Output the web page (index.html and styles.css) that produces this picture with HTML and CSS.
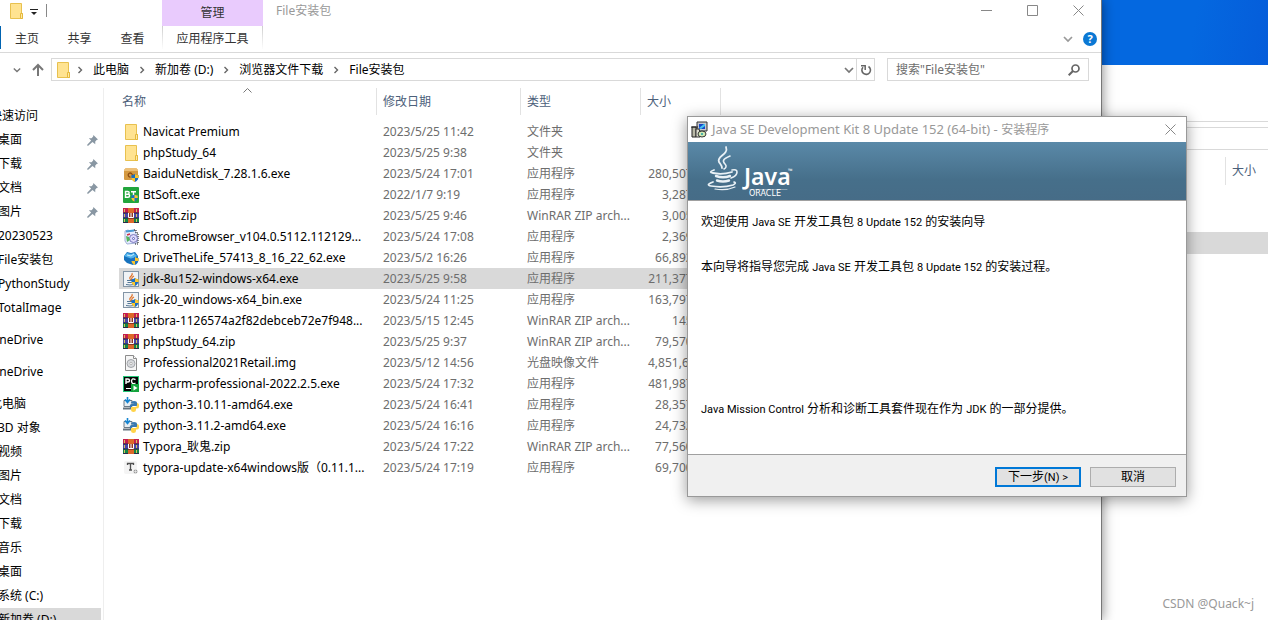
FILE: index.html
```html
<!DOCTYPE html>
<html lang="zh-CN">
<head>
<meta charset="utf-8">
<title>File安装包</title>
<link rel="stylesheet" href="styles.css">
</head>
<body>
<svg class="sprite" aria-hidden="true">
  <symbol id="folder" viewBox="0 0 16 16"><path d="M2.500.5h11v10h1v5h-12z" fill="#ffe391" stroke="#e8c14f"/><path d="M12.500 10.500h2v5h-2z" fill="#ffe9a6" stroke="#e5b93c"/></symbol>
  <symbol id="shield" viewBox="0 0 8 8"><path d="M4 0c1 .8 2.300 1.200 3.700 1.200C7.800 4.500 6.500 7 4 8 1.500 7 .2 4.500.3 1.200 1.700 1.200 3 .8 4 0z" fill="#1a6fc4"/><path d="M4 0c1 .8 2.300 1.200 3.700 1.200V4H4zM4 4v4C2 7.200.8 6 .4 4z" fill="#fbc62d"/></symbol>
  <symbol id="baidu" viewBox="0 0 16 16"><path d="M1 4l2-2h10l2 2v9q0 1-1 1H2q-1 0-1-1z" fill="#d59a42"/><path d="M1 4l2-2h10l2 2v1H1z" fill="#edc078"/><path d="M7.500 11a2 2 0 1 1 1-3.500q1.500 2.500 3 1.500" fill="none" stroke="#8c4c13" stroke-width="1.300"/><use href="#shield" x="8" y="8" width="8" height="8"/></symbol>
  <symbol id="bt" viewBox="0 0 16 16"><rect width="16" height="16" rx="1" fill="#22a53c"/><path d="M2.500 4.500h2.200q1.500 0 1.500 1.300T4.700 7.200H2.500zM2.500 7.200h2.600q1.500 0 1.500 1.500T5 10.200H2.500zM8 4.700h5M10.500 4.700v5" fill="none" stroke="#fff" stroke-width="1.400"/><use href="#shield" x="8" y="7" width="7" height="8"/></symbol>
  <symbol id="rar" viewBox="0 0 16 16"><path d="M0 0h16v5H0z" fill="#c51f4f"/><path d="M0 5h16v5H0z" fill="#4945a8"/><path d="M0 10h16v5H0z" fill="#138647"/><path d="M0 5h16M0 10h16M0 14.500h16" stroke="#292b4b"/><path d="M5 0h6v15H5z" fill="#dc6829"/><path d="M5 5h6v6H5z" fill="#8f3524"/><path d="M5.500 5v4.500h5V5M8 5v4" stroke="#fff" fill="none"/><path d="M1.500 1v3m0 2v3m0 2v3m12-13v3m0 2v3m0 2v3" stroke="#d9c25b"/></symbol>
  <symbol id="chrome" viewBox="0 0 16 16"><path d="M2 2l3-1 2 1 5-1 1 4 2 3-1 6-10 1-2-3z" fill="#e5edff" stroke="#a3b1d7"/><path d="M3 2.500l8-1" stroke="#4a9bd4" stroke-width="2"/><path d="M11 1h2v3h2v11h-4" fill="none" stroke="#111" stroke-dasharray="1 1"/><circle cx="10.500" cy="9.500" r="4" fill="#dcd9fa" stroke="#7c79bd"/><circle cx="10.500" cy="9.500" r="1" fill="#fff" stroke="#5b62ba"/><path d="M3 7l3 1 1 3-3 2z" fill="#55b45c"/><path d="M4 6l3-1" stroke="#ce3045" stroke-width="1.500"/></symbol>
  <symbol id="drive" viewBox="0 0 16 16"><path d="M1 6l3-4 4 1 4-1 3 4v5l-5 4-6-2-3-3z" fill="#1772bd"/><path d="M1 6l3-3 4 1 3-1 3 3-5 3z" fill="#52b4ec"/><path d="M4 5l4 1 3-2" stroke="#cceefe" fill="none"/><use href="#shield" x="8" y="7" width="8" height="8"/></symbol>
  <symbol id="java" viewBox="0 0 16 16"><rect x=".5" y=".5" width="15" height="15" fill="#f0f3f6" stroke="#8395a6"/><path d="M8 9C4 6 11 5 9 2M9 9c-1-2 0-3 2-4" fill="none" stroke="#df742c" stroke-width="1.200"/><path d="M4 9.500h6M4.500 11.500h5M3 13.500q4 1 8 0M10 9.500q3-.5 1 2" fill="none" stroke="#547795"/></symbol>
  <symbol id="javaexe" viewBox="0 0 16 16"><use href="#java" width="16" height="16"/><use href="#shield" x="8" y="7" width="8" height="8"/></symbol>
  <symbol id="img" viewBox="0 0 16 16"><path d="M2.500.5h8l3 3v12h-11z" fill="#f6f6f6" stroke="#8c8c8c"/><path d="M10.500.5v3h3" fill="#fff" stroke="#8c8c8c"/><circle cx="8" cy="8.500" r="4" fill="#d8dadd" stroke="#a2a5aa"/><circle cx="8" cy="8.500" r="1.200" fill="#fff" stroke="#b3b3b3"/></symbol>
  <symbol id="pycharm" viewBox="0 0 16 16"><path d="M0 0h16v16H0z" fill="#23c779"/><path d="M1 1h14v14H1z" fill="#050705"/><path d="M3 8V3h2q1.500 0 1.500 1.500T5 6H3M12.500 3.700Q9 1.500 8.500 5q.3 4 4 2" fill="none" stroke="#fff" stroke-width="1.400"/><path d="M3 12.500h5" stroke="#fff"/><path d="M8 8h8v8H8z" fill="#15a43d"/><path d="M10.500 9.500v5l4-2.500z" fill="#fff"/></symbol>
  <symbol id="python" viewBox="0 0 16 16"><path d="M1 3.500h8v6H1z" fill="#e6edf2" stroke="#6c7a86"/><path d="M0 11.500h9" stroke="#65737e" stroke-width="2"/><path d="M4.500-1v6M2 2.500l2.500 3L7 2.500" fill="none" stroke="#1685d2" stroke-width="1.600"/><path d="M8 6q0-2 3-2t3 2v3H9v2H7q-1-4 2-4h2z" fill="#3978b0"/><path d="M14 6q2.500 0 2 4-.5 1.500-2 1.500h-1V13q0 2-2.500 2T8 13v-3h4q2 0 2-2z" fill="#ffd348"/></symbol>
  <symbol id="typora" viewBox="0 0 16 16"><rect x="1" y="1" width="13" height="13" rx="2" fill="#f4f4f4"/><path d="M4.500 5V3.500h6V5M7.500 3.500v6M6 10h3" fill="none" stroke="#505050" stroke-width="1.300"/><circle cx="12.500" cy="11.500" r="2" fill="#9a9a9a"/><path d="M10.500 11.500h4m-2-2v4" stroke="#fff" stroke-width=".5"/></symbol>
  <symbol id="pin" viewBox="0 0 12 12"><path d="M7 0l5 5-1.500.5-1.500 1.500v3L6 7.500 1 12 0 11l4.500-5L2 3.500h3L6.700 1.500z" fill="#8997a3"/></symbol>
  <symbol id="right" viewBox="0 0 8 8"><path d="M2.500 1l3 3-3 3" fill="none" stroke="#666" stroke-width="1.400"/></symbol>
  <symbol id="down" viewBox="0 0 10 10"><path d="M1 3l4 4 4-4" fill="none" stroke="currentColor" stroke-width="1.700"/></symbol>
  <symbol id="close" viewBox="0 0 11 11"><path d="M.5.5l10 10m0-10l-10 10" stroke="#888"/></symbol>
</svg>

<section class="back-window" aria-label="后台窗口">
  <div class="back-ribbon"></div>
  <div class="back-address"></div>
  <div class="back-head"><span>大小</span></div>
  <div class="back-row"></div>
</section>

<main class="explorer">
  <header class="titlebar">
    <div class="quick">
      <svg class="i16"><use href="#folder"/></svg>
      <svg class="quick-arrow" viewBox="0 0 8 7"><path d="M0 .5h8" stroke="#222"/><path d="M1 3h6L4 6z" fill="#222"/></svg>
      <i class="quick-sep"></i>
    </div>
    <div class="context-title">管理</div>
    <h1 class="window-title">File安装包</h1>
    <div class="controls">
      <button aria-label="最小化"><svg viewBox="0 0 11 11"><path d="M0 5.500h11" stroke="#888"/></svg></button>
      <button aria-label="最大化"><svg viewBox="0 0 11 11"><path d="M.5.5h10v10H.5z" fill="none" stroke="#888"/></svg></button>
      <button aria-label="关闭"><svg><use href="#close"/></svg></button>
    </div>
  </header>
  <nav class="ribbon" aria-label="功能区">
    <button>主页</button><button>共享</button><button>查看</button><button class="context-tab">应用程序工具</button>
    <span class="ribbon-tools">
      <svg class="i10 faint"><use href="#down"/></svg>
      <button class="help" aria-label="帮助">?</button>
    </span>
  </nav>
  <div class="address-row">
    <div class="history">
      <svg class="i8"><use href="#down"/></svg>
      <svg class="up" viewBox="0 0 12 14"><path d="M6 13V2M1 7l5-5 5 5" fill="none" stroke="#777" stroke-width="2"/></svg>
    </div>
    <div class="address">
      <svg class="i16"><use href="#folder"/></svg>
      <svg class="i8"><use href="#right"/></svg><button>此电脑</button>
      <svg class="i8"><use href="#right"/></svg><button>新加卷 (D:)</button>
      <svg class="i8"><use href="#right"/></svg><button>浏览器文件下载</button>
      <svg class="i8"><use href="#right"/></svg><button>File安装包</button>
      <svg class="i10 drop"><use href="#down"/></svg>
      <button class="refresh" aria-label="刷新"><svg viewBox="0 0 12 12"><path d="M8.500 2.500A4.300 4.300 0 1 1 3 3.200" fill="none" stroke="#666" stroke-width="1.600"/><path d="M1 1.800h4.200V6" fill="none" stroke="#666" stroke-width="1.500"/></svg></button>
    </div>
    <label class="search">
      <input type="search" placeholder='搜索"File安装包"' aria-label="搜索">
      <svg viewBox="0 0 12 12"><circle cx="7.500" cy="4.500" r="3.500" fill="none" stroke="#666" stroke-width="1.700"/><path d="M5 7L.7 11.300" stroke="#666" stroke-width="2"/></svg>
    </label>
  </div>
  <div class="content">
    <nav class="tree" aria-label="导航窗格">
      <ul>
        <li class="root">快速访问</li>
        <li>桌面<svg><use href="#pin"/></svg></li>
        <li>下载<svg><use href="#pin"/></svg></li>
        <li>文档<svg><use href="#pin"/></svg></li>
        <li>图片<svg><use href="#pin"/></svg></li>
        <li>20230523</li>
        <li>File安装包</li>
        <li>PythonStudy</li>
        <li>TotalImage</li>
      </ul>
      <ul><li class="root">OneDrive</li></ul>
      <ul><li class="root">OneDrive</li></ul>
      <ul>
        <li class="root">此电脑</li>
        <li>3D 对象</li>
        <li>视频</li>
        <li>图片</li>
        <li>文档</li>
        <li>下载</li>
        <li>音乐</li>
        <li>桌面</li>
        <li>系统 (C:)</li>
        <li class="selected">新加卷 (D:)</li>
      </ul>
    </nav>
    <div class="files">
      <table>
        <colgroup><col class="c-name"><col class="c-date"><col class="c-type"><col class="c-size"></colgroup>
        <thead><tr>
          <th><div>名称<svg class="sort" viewBox="0 0 9 5"><path d="M.5 4.500l4-4 4 4" fill="none" stroke="#777"/></svg></div></th>
          <th><div>修改日期</div></th><th><div>类型</div></th><th><div>大小</div></th>
        </tr></thead>
        <tbody>
          <tr><td><svg><use href="#folder"/></svg>Navicat Premium</td><td>2023/5/25 11:42</td><td>文件夹</td><td></td></tr>
          <tr><td><svg><use href="#folder"/></svg>phpStudy_64</td><td>2023/5/25 9:38</td><td>文件夹</td><td></td></tr>
          <tr><td><svg><use href="#baidu"/></svg>BaiduNetdisk_7.28.1.6.exe</td><td>2023/5/24 17:01</td><td>应用程序</td><td>280,507 KB</td></tr>
          <tr><td><svg><use href="#bt"/></svg>BtSoft.exe</td><td>2022/1/7 9:19</td><td>应用程序</td><td>3,287 KB</td></tr>
          <tr><td><svg><use href="#rar"/></svg>BtSoft.zip</td><td>2023/5/25 9:46</td><td>WinRAR ZIP arch...</td><td>3,005 KB</td></tr>
          <tr><td><svg><use href="#chrome"/></svg>ChromeBrowser_v104.0.5112.112129...</td><td>2023/5/24 17:08</td><td>应用程序</td><td>2,369 KB</td></tr>
          <tr><td><svg><use href="#drive"/></svg>DriveTheLife_57413_8_16_22_62.exe</td><td>2023/5/2 16:26</td><td>应用程序</td><td>66,892 KB</td></tr>
          <tr class="selected"><td><svg><use href="#javaexe"/></svg>jdk-8u152-windows-x64.exe</td><td>2023/5/25 9:58</td><td>应用程序</td><td>211,377 KB</td></tr>
          <tr><td><svg><use href="#javaexe"/></svg>jdk-20_windows-x64_bin.exe</td><td>2023/5/24 11:25</td><td>应用程序</td><td>163,797 KB</td></tr>
          <tr><td><svg><use href="#rar"/></svg>jetbra-1126574a2f82debceb72e7f948...</td><td>2023/5/15 12:45</td><td>WinRAR ZIP arch...</td><td>145 KB</td></tr>
          <tr><td><svg><use href="#rar"/></svg>phpStudy_64.zip</td><td>2023/5/25 9:37</td><td>WinRAR ZIP arch...</td><td>79,570 KB</td></tr>
          <tr><td><svg><use href="#img"/></svg>Professional2021Retail.img</td><td>2023/5/12 14:56</td><td>光盘映像文件</td><td>4,851,668 KB</td></tr>
          <tr><td><svg><use href="#pycharm"/></svg>pycharm-professional-2022.2.5.exe</td><td>2023/5/24 17:32</td><td>应用程序</td><td>481,987 KB</td></tr>
          <tr><td><svg><use href="#python"/></svg>python-3.10.11-amd64.exe</td><td>2023/5/24 16:41</td><td>应用程序</td><td>28,357 KB</td></tr>
          <tr><td><svg><use href="#python"/></svg>python-3.11.2-amd64.exe</td><td>2023/5/24 16:16</td><td>应用程序</td><td>24,732 KB</td></tr>
          <tr><td><svg><use href="#rar"/></svg>Typora_耿鬼.zip</td><td>2023/5/24 17:22</td><td>WinRAR ZIP arch...</td><td>77,560 KB</td></tr>
          <tr><td><svg><use href="#typora"/></svg>typora-update-x64windows版（0.11.1...</td><td>2023/5/24 17:19</td><td>应用程序</td><td>69,700 KB</td></tr>
        </tbody>
      </table>
    </div>
  </div>
</main>

<section class="dialog" role="dialog" aria-labelledby="dialog-title">
  <header class="dialog-title">
    <svg class="i16" viewBox="0 0 16 16"><path d="M6 0h10v9H6z" fill="#c5c8ce" stroke="#333"/><path d="M8 2h6v5H8z" fill="#1746c9"/><path d="M8 6l5-4h1v2l-4 3z" fill="#45c4ee"/><path d="M1 5h4v10H1zM0 5h7" fill="#b8b8a6" stroke="#222"/><path d="M5 7h3l1 3v5H5z" fill="#deded0" stroke="#333"/><ellipse cx="11" cy="12" rx="4" ry="3" fill="#d1e8b4" stroke="#333"/><circle cx="11" cy="12" r="1" fill="#1fa3a8"/></svg>
    <h2 id="dialog-title"><span>Java SE Development Kit 8 Update 152 (64-bit) - </span>安装程序</h2>
    <button aria-label="关闭"><svg><use href="#close"/></svg></button>
  </header>
  <div class="banner">
    <svg class="logo" viewBox="0 0 90 56" role="img" aria-label="Java Oracle">
      <g fill="none" stroke="#e9f1f6" stroke-linecap="round">
        <path d="M20 3c3 8-10 9-7 15 1 2 3 3 3 6" stroke-width="1.800"/>
        <path d="M24 12c-7 3-8 5-5 8 2 2 1 4-1 5" stroke-width="1.600"/>
        <path d="M8 26q-6 2-1 3 9 2 19-1" stroke-width="1.800"/>
        <path d="M10 32q7 2.500 14 0M11 36.500q6 2 12 0" stroke-width="2.400"/>
        <path d="M26 26q5-1 5 2 0 4-6 6" stroke-width="1.600"/>
        <path d="M7 38q-8 3-2 4 12 2 22-1 4-2 1-3" stroke-width="1.700"/>
        <path d="M9 45q11 2 20-2" stroke-width="1.200"/>
        <path d="M44 45.500h37" stroke-width="1" opacity=".4"/>
      </g>
      <text class="logo-java" x="38" y="41">Java</text>
      <text class="logo-oracle" x="43" y="52">ORACLE</text>
      <text class="logo-tm" x="82" y="29">™</text>
    </svg>
  </div>
  <div class="dialog-body">
    <p>欢迎使用 <span>Java SE</span> 开发工具包 <span>8 Update 152</span> 的安装向导</p>
    <p>本向导将指导您完成 <span>Java SE</span> 开发工具包 <span>8 Update 152</span> 的安装过程。</p>
    <p class="note"><span>Java Mission Control</span> 分析和诊断工具套件现在作为 <span>JDK</span> 的一部分提供。</p>
  </div>
  <footer class="dialog-foot">
    <button class="primary">下一步<span>(N) &gt;</span></button>
    <button>取消</button>
  </footer>
</section>
<div class="watermark">CSDN @Quack~j</div>
</body>
</html>
```
FILE: styles.css
```css
* { box-sizing: border-box; }
body {
  margin: 0;
  height: 100vh;
  position: relative;
  overflow: hidden;
  background: linear-gradient(100deg, #0468e0 87%, #074fd2 100%);
  font: 12px/20px "Noto Sans", "Noto Sans CJK SC", sans-serif;
  color: #000;
}
h1, h2, p, ul { margin: 0; padding: 0; font-size: inherit; font-weight: normal; }
button { margin: 0; padding: 0; border: 0; background: none; font: inherit; color: inherit; }
svg { display: block; flex: none; overflow: visible; }
.sprite { position: absolute; width: 0; height: 0; }
.i16 { width: 16px; height: 16px; }
.i10 { width: 10px; height: 10px; }
.i8 { width: 8px; height: 8px; color: #777; }

/* window behind the explorer */
.back-window { position: absolute; left: 50%; right: 0; top: 65px; bottom: 0; background: #fff; }
.back-ribbon { height: 57px; border-bottom: 1px solid #d9d9d9; }
.back-address { height: 23px; margin: 5px 0 7px; border: solid #d9d9d9; border-width: 1px 0; }
.back-head { display: flex; justify-content: flex-end; color: #4c607a; }
.back-head span { width: 43px; height: 28px; line-height: 28px; padding-left: 6px; border-left: 1px solid #e2e2e2; }
.back-row { height: 22px; margin-top: 47px; background: #d9d9d9; }

/* explorer */
.explorer {
  position: absolute; left: 0; right: 166px; top: 0; bottom: 0;
  display: flex; flex-direction: column;
  background: #fff; border-right: 1px solid #777;
  box-shadow: 0 0 12px rgba(0, 0, 0, .5);
}
.titlebar { display: flex; height: 26px; flex: none; }
.quick { width: 162px; display: flex; padding: 3px 0 0 8px; }
.quick-arrow { width: 8px; height: 7px; margin: 6px 0 0 6px; }
.quick-sep { width: 1px; height: 13px; margin: 1px 0 0 8px; background: #888; }
.context-title { width: 101px; background: #e9cbfd; text-align: center; line-height: 26px; color: #333; }
.window-title { flex: 1; padding-left: 13px; line-height: 22px; color: #999; }
.controls { display: flex; height: 21px; }
.controls button { width: 46px; display: flex; align-items: center; justify-content: center; }
.controls svg { width: 11px; height: 11px; }
.ribbon { display: flex; height: 27px; flex: none; border-bottom: 1px solid #d9d9d9; color: #333; }
.ribbon > button { width: 53px; height: 23px; line-height: 26px; }
.ribbon > button:first-child { border-left: 1px solid #0063b1; }
.ribbon > .context-tab {
  width: 101px; margin-left: 3px; border: solid; border-width: 0 1px;
  border-image: linear-gradient(#ccc, #fff) 1;
}
.ribbon-tools { margin-left: auto; display: flex; align-items: center; gap: 10px; padding-right: 4px; }
.faint { color: #999; }
.help { width: 14px; height: 14px; border-radius: 50%; background: #0a78d4; color: #fff; font-weight: bold; line-height: 14px; font-size: 11px; }
.address-row { display: flex; height: 35px; flex: none; padding: 5px 12px 0 0; }
.history { width: 51px; display: flex; align-items: center; gap: 11px; padding-left: 13px; height: 23px; }
.up { width: 12px; height: 14px; }
.address { flex: 1; display: flex; align-items: center; height: 23px; border: 1px solid #d9d9d9; padding-left: 3px; white-space: nowrap; }
.address .i16 { margin-right: 5px; }
.address .i8 { margin-right: 9px; }
.address button + .i8 { margin-left: 9px; }
.address .drop { margin: 0 2px 0 auto; color: #777; }
.address .refresh { width: 18px; height: 21px; border-left: 1px solid #d9d9d9; display: flex; align-items: center; justify-content: center; }
.refresh svg { width: 12px; height: 12px; }
.search { width: 202px; height: 23px; margin-left: 12px; display: flex; align-items: center; border: 1px solid #d9d9d9; padding: 0 8px; }
.search input { flex: 1; min-width: 0; border: 0; padding: 0; outline: 0; background: none; font: inherit; }
.search input::placeholder { color: #6d6d6d; opacity: 1; }
.search svg { width: 12px; height: 12px; }
.content { flex: 1; display: flex; min-height: 0; }
.tree { width: 104px; flex: none; border-right: 1px solid #eee; padding: 16px 2px 0 0; overflow: hidden; }
.tree ul { list-style: none; margin-bottom: 8px; }
.tree li { display: flex; justify-content: space-between; align-items: center; height: 24px; text-indent: -2px; padding-right: 3px; white-space: nowrap; }
.tree .root { text-indent: -10px; }
.tree svg { width: 11px; height: 11px; }
.selected { background: #d9d9d9; }

.files { flex: 1; min-width: 0; padding-left: 15px; overflow: hidden; }
table { width: 602px; table-layout: fixed; border-collapse: collapse; }
.c-name { width: 257px; }
.c-date { width: 144px; }
.c-type { width: 120px; }
.c-size { width: 81px; }
th { padding: 0 0 6px; font-weight: normal; text-align: left; color: #4c607a; }
th div { position: relative; height: 27px; line-height: 27px; padding-left: 6px; border-left: 1px solid #e2e2e2; }
th:first-child div { padding-left: 3px; border: 0; }
th:last-child div { border-right: 1px solid #e2e2e2; }
.sort { position: absolute; left: calc(50% - 5px); top: 0; width: 9px; height: 5px; }
td { height: 21px; padding: 0 0 0 7px; line-height: 21px; color: #6d6d6d; white-space: nowrap; }
td:first-child { display: flex; align-items: center; gap: 4px; padding-left: 4px; color: #000; }
td:last-child { text-align: right; padding: 0 10px 0 8px; overflow: hidden; text-overflow: ellipsis; }
td svg { width: 16px; height: 16px; }

/* installer */
.dialog {
  position: absolute; right: 81px; top: 116px; width: 500px;
  display: flex; flex-direction: column;
  background: #fff; border: 1px solid #999;
  box-shadow: 0 3px 14px rgba(0, 0, 0, .4);
}
.dialog-title { display: flex; align-items: center; height: 25px; padding: 0 10px 0 3px; gap: 5px; color: #999; }
.dialog-title h2 { flex: 1; white-space: nowrap; }
.dialog-title h2 span { font-size: 13px; }
.dialog-title button svg { width: 11px; height: 11px; }
.banner { height: 59px; padding: 2px 18px; background: linear-gradient(#5a89a8, #466f8a 65%, #466c87); border-bottom: 1px solid #a0a0a0; }
.logo { width: 90px; height: 56px; }
.logo text { fill: #fff; font-family: "Noto Sans", sans-serif; }
.logo .logo-java { font-size: 23px; font-weight: 600; }
.logo .logo-oracle { font-family: "DejaVu Sans", sans-serif; font-size: 8px; }
.logo .logo-tm { font-size: 6px; }
.dialog-body { height: 253px; padding: 11px 13px; display: flex; flex-direction: column; gap: 24px; }
.dialog-body span, .dialog-foot span { font-family: Roboto, sans-serif; font-size: 11px; }
.note { margin-top: auto; margin-bottom: 23px; }
.dialog-foot { display: flex; justify-content: flex-end; gap: 9px; padding: 12px 10px 9px; background: #f0f0f0; border-top: 1px solid #a0a0a0; }
.dialog-foot button { width: 86px; height: 20px; line-height: 18px; border: 1px solid #adadad; background: #e1e1e1; }
.dialog-foot .primary { border: 2px solid #0078d7; line-height: 16px; }
.watermark { position: absolute; right: 14px; bottom: 6px; color: #999; }
```
